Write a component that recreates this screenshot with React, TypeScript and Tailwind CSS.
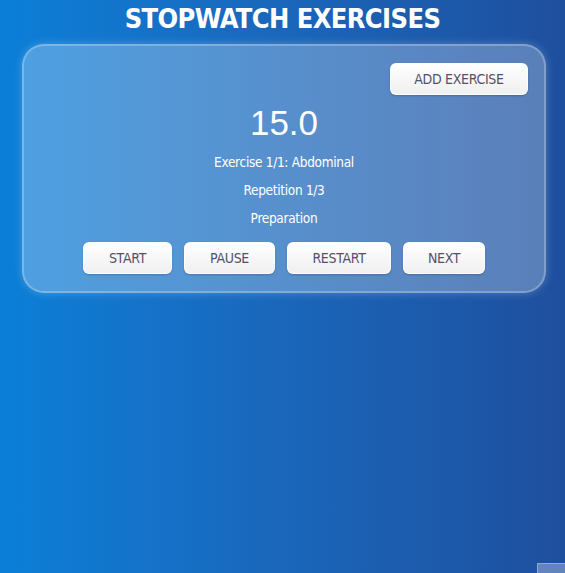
const buttonCls =
  "h-8 rounded-md bg-gradient-to-b from-white to-[#f0f0f0] text-[14px] font-medium tracking-[-0.3px] text-[#55506a] shadow-[0_1px_2px_rgba(0,0,0,0.2)] border border-white/80";

export default function App() {
  return (
    <div
      className="relative min-h-screen w-full bg-gradient-to-r from-[#0a7fd8] to-[#1e4f9e] text-white"
      style={{ fontFamily: '"DejaVu Sans Condensed", "Liberation Sans Narrow", "Noto Sans", sans-serif' }}
    >
      <h1 className="pt-[1px] text-center text-[27px] font-bold leading-[36px] tracking-[-0.6px]">
        STOPWATCH EXERCISES
      </h1>

      <div className="ml-[22px] mr-[19px] mt-[7px] rounded-[22px] border-2 border-white/25 bg-white/[0.27] px-[16px] pb-[17px] pt-[17px] shadow-[0_0_8px_rgba(255,255,255,0.25)]">
        <div className="flex justify-end">
          <button className={`${buttonCls} w-[138px]`}>ADD EXERCISE</button>
        </div>

        <div className="flex flex-col items-center">
          <div
            className="mt-[8px] text-[35px] leading-[40px]"
            style={{ fontFamily: '"Liberation Sans", Arial, sans-serif' }}
          >
            15.0
          </div>
          <p className="mt-[9px] text-[13.5px] leading-[20px] tracking-[-0.3px]">Exercise 1/1: Abdominal</p>
          <p className="mt-[8px] text-[13.5px] leading-[20px] tracking-[-0.3px]">Repetition 1/3</p>
          <p className="mt-[8px] text-[13.5px] leading-[20px] tracking-[-0.3px]">Preparation</p>

          <div className="mt-[14px] flex gap-3">
            <button className={`${buttonCls} w-[89px]`}>START</button>
            <button className={`${buttonCls} w-[91px]`}>PAUSE</button>
            <button className={`${buttonCls} w-[104px]`}>RESTART</button>
            <button className={`${buttonCls} w-[82px]`}>NEXT</button>
          </div>
        </div>
      </div>

      <div className="absolute bottom-0 right-0 h-[10px] w-[28px] border-l border-t border-white/30 bg-white/30" />
    </div>
  );
}
